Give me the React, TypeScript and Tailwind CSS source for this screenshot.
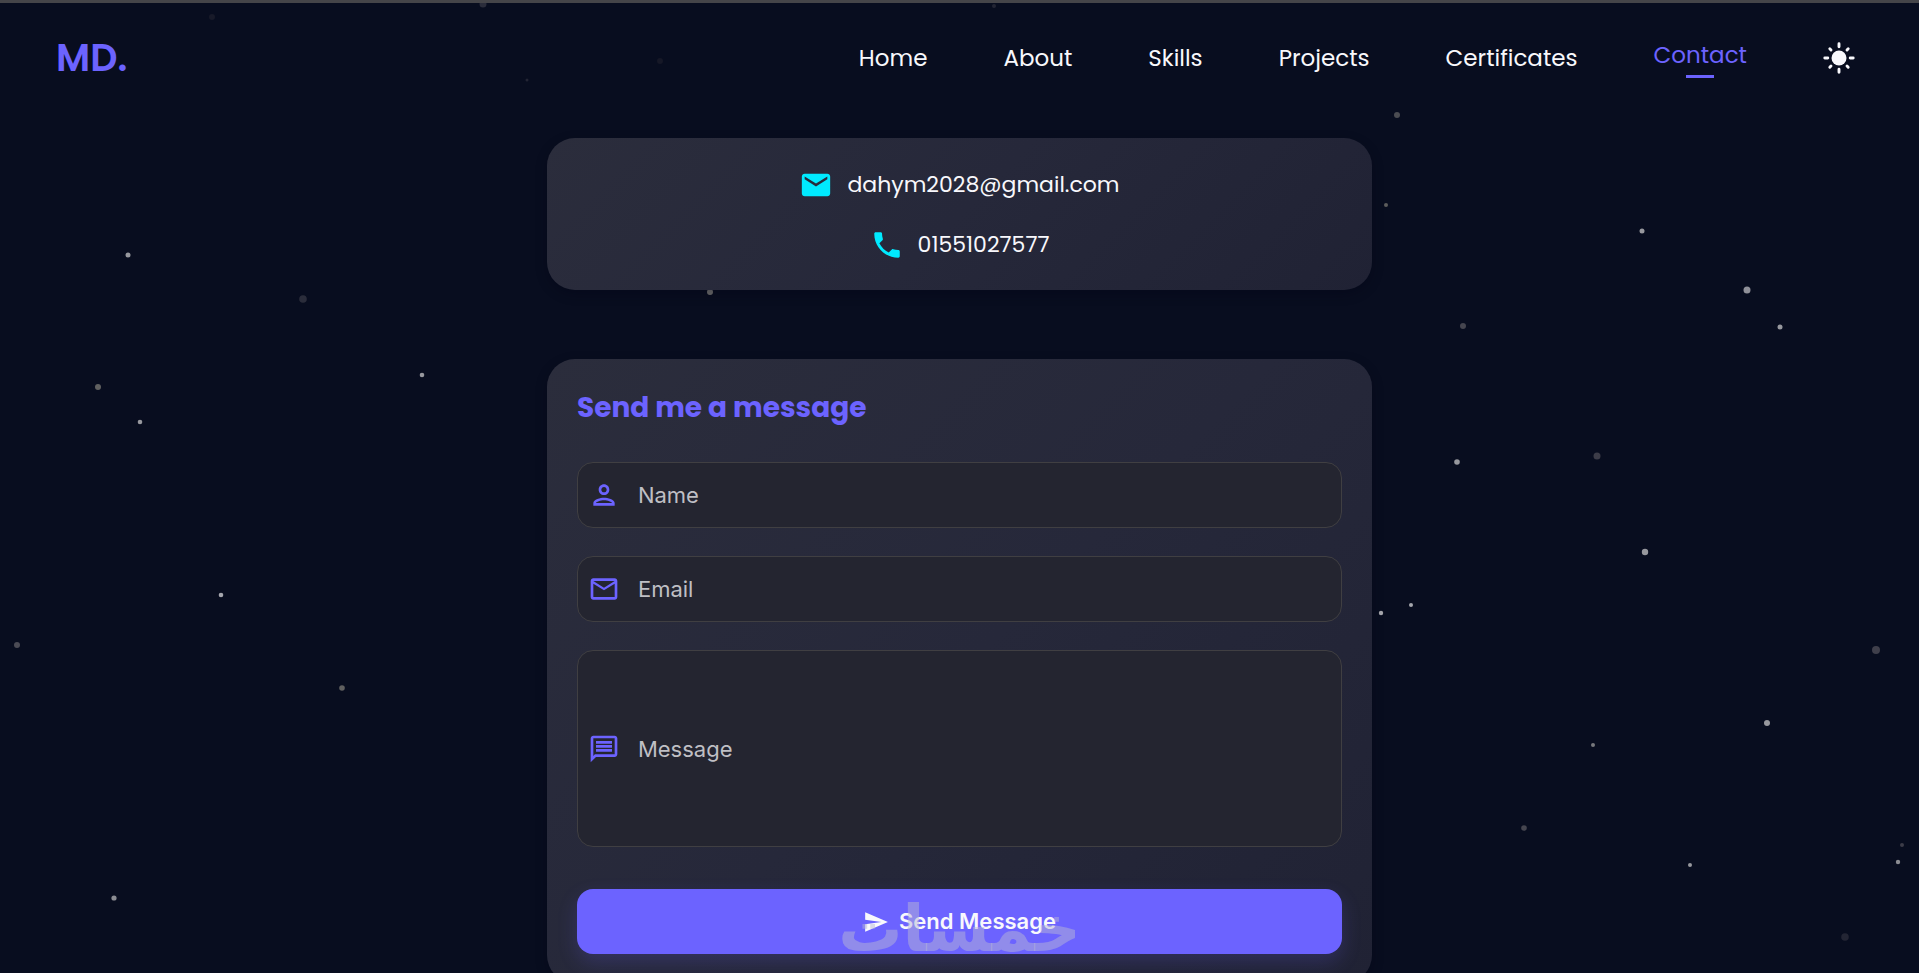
import {
  MdEmail,
  MdLocalPhone,
  MdOutlinePerson,
  MdMailOutline,
  MdOutlineMessage,
  MdSend,
} from "react-icons/md";

const links = ["Home", "About", "Skills", "Projects", "Certificates"];

// x, y, radius, fill
const stars: Array<[number, number, number, string]> = [
  [128, 255, 2.5, "#97989e"],
  [303, 299, 3.8, "#2b2d3b"],
  [212, 17, 3, "#181a29"],
  [483, 4, 3.5, "#2b2d3b"],
  [660, 61, 3, "#161827"],
  [527, 80, 1.5, "#232534"],
  [994, 6, 2, "#232534"],
  [1397, 115, 3, "#4b4c52"],
  [1386, 205, 2, "#5c5c5c"],
  [710, 292, 3, "#6b6b6b"],
  [1642, 231, 2.5, "#97989e"],
  [1747, 290, 3.5, "#8f9098"],
  [1780, 327, 2.5, "#97989e"],
  [1463, 326, 3, "#45454f"],
  [98, 387, 3, "#606060"],
  [140, 422, 2.3, "#97989e"],
  [422, 375, 2.3, "#97989e"],
  [221, 595, 2.3, "#a5a6ad"],
  [17, 645, 3, "#4b4b55"],
  [342, 688, 2.8, "#606060"],
  [114, 898, 2.6, "#8b8c92"],
  [1457, 462, 2.8, "#97989e"],
  [1597, 456, 3.5, "#3c3c48"],
  [1645, 552, 3.2, "#97989e"],
  [1381, 613, 2.2, "#a5a6ad"],
  [1411, 605, 2, "#a5a6ad"],
  [1876, 650, 4, "#3f3f4b"],
  [1767, 723, 3, "#97989e"],
  [1593, 745, 2, "#77787c"],
  [1524, 828, 2.8, "#45454f"],
  [1690, 865, 2, "#97989e"],
  [1902, 845, 2, "#3c3c48"],
  [1898, 862, 2.2, "#8b8c92"],
  [1845, 937, 3.8, "#232534"],
];

const card =
  "rounded-[28px] bg-linear-135 from-[#2b2d3c] via-[#26283a] to-[#202234] shadow-[0_4px_12px_rgba(4,4,20,0.3)]";
const field =
  "flex items-center gap-[18px] rounded-2xl border border-[#403f42] bg-[#242530] pl-2.5 text-[#6c63ff]";
const control =
  "min-w-0 flex-1 resize-none bg-transparent font-[Inter,sans-serif] text-[22px] leading-7 text-white outline-none placeholder:text-[#bfbfc4] placeholder:opacity-100";

function Stars() {
  return (
    <svg className="pointer-events-none absolute inset-0 h-full w-full" aria-hidden="true">
      {stars.map(([x, y, r, fill]) => (
        <circle key={`${x}-${y}`} cx={x} cy={y} r={r} fill={fill} />
      ))}
    </svg>
  );
}

function SunIcon() {
  return (
    <svg viewBox="0 0 32 32" className="h-8 w-8" fill="none" stroke="#f8f8fc" strokeWidth="2.9" strokeLinecap="round">
      <circle cx="16" cy="16" r="7.5" fill="#f8f8fc" stroke="none" />
      <path d="M16 1.8v3M16 27.2v3M1.8 16h3M27.2 16h3M6.8 6.8l1.2 1.2M24 24l1.2 1.2M6.8 25.2L8 24M24 8l1.2-1.2" />
    </svg>
  );
}

function Navbar() {
  return (
    <header className="flex items-center justify-between px-14 pt-[23px]">
      <a href="#home" className="text-[38px] font-semibold leading-[70px] text-[#6c63ff]">
        MD.
      </a>
      <nav className="flex items-center gap-[76px] pr-2 text-[23px] leading-8 text-[#f8f8fc]">
        {links.map((link) => (
          <a key={link} href={`#${link.toLowerCase()}`}>
            {link}
          </a>
        ))}
        <a href="#contact" className="flex flex-col items-center gap-1 text-[#6c63ff]">
          Contact
          <span className="h-[3px] w-7 bg-[#6c63ff]" />
        </a>
        <button type="button" aria-label="Toggle theme">
          <SunIcon />
        </button>
      </nav>
    </header>
  );
}

function ContactInfo() {
  return (
    <section className={`${card} flex flex-col items-center gap-[26px] pb-7 pt-[30px] text-[22px] leading-8 text-[#f8f8fc]`}>
      <a href="mailto:dahym2028@gmail.com" className="flex items-center gap-[14px]">
        <MdEmail className="h-[34px] w-[34px] text-[#00eaff]" />
        dahym2028@gmail.com
      </a>
      <a href="tel:01551027577" className="flex items-center gap-[14px]">
        <MdLocalPhone className="h-[34px] w-[34px] text-[#00eaff]" />
        01551027577
      </a>
    </section>
  );
}

function MessageForm() {
  return (
    <form className={`${card} px-[30px] pb-[29px] pt-7`}>
      <h2 className="text-[28px] font-bold leading-[42px] text-[#6c63ff]">Send me a message</h2>
      <div className="mt-[33px] flex flex-col gap-7">
        <label className={`${field} h-[66px]`}>
          <MdOutlinePerson className="h-8 w-8" />
          <input type="text" placeholder="Name" aria-label="Name" className={control} />
        </label>
        <label className={`${field} h-[66px]`}>
          <MdMailOutline className="h-8 w-8" />
          <input type="email" placeholder="Email" aria-label="Email" className={control} />
        </label>
        <label className={`${field} h-[197px]`}>
          <MdOutlineMessage className="h-8 w-8" />
          <textarea placeholder="Message" aria-label="Message" rows={1} className={control} />
        </label>
      </div>
      <button
        type="button"
        className="relative mt-[42px] flex h-[65px] w-full items-center justify-center gap-2.5 rounded-2xl bg-[#6c63ff] font-[Inter,sans-serif] text-[22px] font-semibold text-[#f8f8fc] shadow-[0_8px_20px_rgba(108,99,255,0.2)]"
      >
        <MdSend className="h-[26px] w-[26px]" />
        Send Message
      </button>
    </form>
  );
}

export default function App() {
  return (
    <div className="relative h-screen overflow-hidden bg-[#080d1f] font-[Poppins,Inter,sans-serif]">
      <Stars />
      <div className="absolute inset-x-0 top-0 h-[3px] bg-[#454549]" />
      <div className="relative">
        <Navbar />
        <main className="mx-auto mt-[45px] flex w-[43%] flex-col gap-[69px]">
          <ContactInfo />
          <MessageForm />
        </main>
      </div>
      <span
        dir="rtl"
        className="pointer-events-none absolute bottom-3 left-1/2 -translate-x-1/2 font-['DejaVu_Sans'] text-[64px] font-bold leading-none text-[#b5b5d5]/50"
      >
        خمسات
      </span>
    </div>
  );
}
